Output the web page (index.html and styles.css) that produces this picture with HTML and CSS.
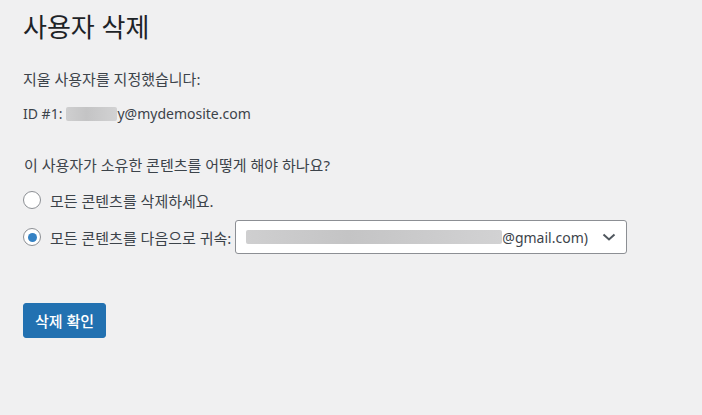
FILE: index.html
```html
<!DOCTYPE html>
<html lang="ko">
<head>
    <meta charset="UTF-8">
    <title>사용자 삭제</title>
    <link rel="stylesheet" href="styles.css">
</head>
<body>
    <div class="wrap">
        <h1>사용자 삭제</h1>

        <p class="intro">지울 사용자를 지정했습니다:</p>
        <p class="user-id"><span class="latin">ID #1:</span> <span class="blur blur-short"></span><span class="latin">y@mydemosite.com</span></p>

        <fieldset class="attribution">
            <p class="question">이 사용자가 소유한 콘텐츠를 어떻게 해야 하나요?</p>

            <label class="choice">
                <span class="radio"></span>
                모든 콘텐츠를 삭제하세요.
            </label>

            <div class="choice">
                <span class="radio checked"></span>
                <span>모든 콘텐츠를 다음으로 귀속:</span>
                <div class="select">
                    <span class="select-text"><span class="blur blur-long"></span><span class="latin">@gmail.com)</span></span>
                    <svg class="chevron" width="14" height="10" viewBox="0 0 14 10">
                        <path d="M1.5 2.5 L7 7.5 L12.5 2.5" fill="none" stroke="#50575e" stroke-width="2"/>
                    </svg>
                </div>
            </div>
        </fieldset>

        <button class="button-primary">삭제 확인</button>
    </div>
</body>
</html>
```

FILE: styles.css
```css
/* Admin page base */
body {
    margin: 0;
    background-color: #f0f0f1;
    color: #3c434a;
    font-family: "Noto Sans", "Noto Sans CJK KR", sans-serif;
    font-size: 15px;
}

.wrap {
    padding: 0 23px;
}

/* Latin runs are set a touch smaller than the Hangul around them */
.latin {
    font-size: 14px;
}

h1 {
    margin: 0;
    padding-top: 10px;
    font-size: 26px;
    font-weight: 400;
    line-height: 34px;
    color: #1d2327;
}

p {
    margin: 0;
}

.intro {
    margin-top: 25px;
    line-height: 20px;
}

.user-id {
    margin-top: 15px;
    line-height: 20px;
    display: flex;
    align-items: center;
}

.blur {
    display: inline-block;
    height: 14px;
    background: linear-gradient(90deg, #cfcfd0, #c4c4c5 40%, #d2d2d3);
    border-radius: 2px;
}

.blur-short {
    width: 51px;
    margin-left: 4px;
}

.blur-long {
    width: 256px;
    margin-left: 10px;
}

/* Content attribution options */
.attribution {
    border: none;
    margin: 31px 0 0;
    padding: 0;
}

.question {
    line-height: 20px;
    padding-left: 1px;
    margin-bottom: 15px;
}

.choice {
    display: flex;
    align-items: center;
    gap: 9px;
    height: 20px;
    margin-bottom: 17px;
}

.radio {
    width: 16px;
    height: 16px;
    border: 1px solid #8c8f94;
    border-radius: 50%;
    background-color: #ffffff;
    display: flex;
    align-items: center;
    justify-content: center;
    flex-shrink: 0;
}

.radio.checked::after {
    content: "";
    width: 9px;
    height: 9px;
    border-radius: 50%;
    background-color: #3582c4;
}

.select {
    display: flex;
    align-items: center;
    justify-content: space-between;
    width: 390px;
    height: 32px;
    border: 1px solid #8c8f94;
    border-radius: 3px;
    background-color: #ffffff;
    margin-left: -5px;
}

.select-text {
    display: flex;
    align-items: center;
}

.chevron {
    margin-right: 10px;
}

.button-primary {
    margin-top: 39px;
    background-color: #2271b1;
    border: 1px solid #2271b1;
    border-radius: 3px;
    color: #ffffff;
    font-family: inherit;
    font-size: 15px;
    font-weight: 500;
    height: 35px;
    width: 83px;
    padding: 0;
    cursor: pointer;
}
```
